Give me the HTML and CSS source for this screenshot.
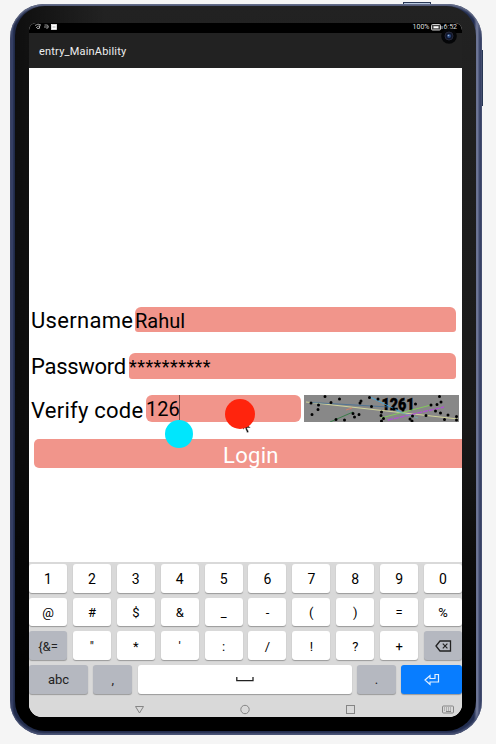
FILE: index.html
```
<!DOCTYPE html>
<html lang="en">
<head>
<meta charset="utf-8">
<title>entry_MainAbility</title>
<link rel="stylesheet" href="styles.css">
</head>
<body>
<div class="tablet">
  <i class="hw hw-top"></i><i class="hw hw-side"></i>
  <div class="bezel">
  <div class="screen">
    <div class="status">
      <svg class="status-icons" width="24" height="8" viewBox="0 0 24 8" fill="none" stroke="#bbb" stroke-width=".8"><path d="M0 2.500Q3 0 6 2M2 4Q4 2 5 4L3 6L1 4M5 2L4 6"/><path d="M9.500 2h3l1 2-2 2M9 4h4"/><rect x="16.500" y="1.500" width="5" height="5" fill="#fff" stroke="#eee"/><path d="M17.500 4h3" stroke="#999"/></svg>
      <div class="status-right"><span>100%</span><svg width="12" height="7" viewBox="0 0 12 7"><rect x=".5" y=".5" width="9" height="5.500" rx="1" fill="#444" stroke="#ccc"/><path d="M2.500 3.300h5" stroke="#fff" stroke-width="2"/><path d="M11 2v3" stroke="#bbb"/></svg><span>6:52</span></div>
      <svg class="camera" width="16" height="16" viewBox="0 0 16 16"><circle cx="8" cy="8" r="7.800" fill="#050608"/><circle cx="8" cy="8" r="4" fill="#10162b" stroke="#26283a"/><circle cx="8" cy="8" r="2" fill="#29477c"/><circle cx="7.500" cy="7.500" r=".8" fill="#9fb6d8"/></svg>
    </div>
    <div class="title"><span>entry_MainAbility</span></div>
    <main class="form">
      <div class="row username"><label>Username</label><div class="field"><span>Rahul</span></div></div>
      <div class="row password"><label>Password</label><div class="field"><span>**********</span></div></div>
      <div class="row verify"><label>Verify code</label>
        <div class="field"><span>126</span><i class="caret"></i>
          <b class="handle"></b>
          <svg class="cursor" width="9" height="13" viewBox="0 0 9 13"><path d="M1 0V9L3 7L5 12L7 11L5 7H9Z" fill="#111" stroke="#fff" stroke-width=".6"/></svg>
          <b class="pointer"></b>
        </div>
        <svg class="captcha" width="155" height="27" viewBox="0 0 155 27"><rect width="155" height="27" fill="#888"/>
          <g class="digits"><text x="77.500" y="14.500" textLength="33" lengthAdjust="spacingAndGlyphs">1261</text></g>
          <g fill="none" stroke-width=".8"><path d="M2 7L154 24" stroke="#e5e8a0"/><path d="M8 7.500L85 12" stroke="#426f95"/><path d="M66 2L99 18" stroke="#38a9e8"/><path d="M77 23L127 10" stroke="#80d94f"/><path d="M84 25L140 12" stroke="#ae53d2" stroke-width="1.300" stroke-dasharray="5 1"/><path d="M26 27L49 17" stroke="#267838"/><path d="M42 15l6-2" stroke="#e9785f"/><path d="M92 16l22 7" stroke="#70aeb0"/></g>
          <path class="dots" d="M21 1.500h0M7 8h0M14.500 10h0M14 14.500h0M8 19.500h0M27 7.500h0M35.500 4h0M57 6h0M56 8h0M49 18.500h0M50.500 22h0M55 19.500h0M32 24.500h0M40.500 25h0M65.500 2.500h0M74 4h0M67.500 11.500h0M77.500 17h0M77 20.500h0M79.500 23.500h0M77.500 26h0M90 14h0M99 15h0M111.500 9h0M108.500 21h0M106 24h0M108 26h0M122 20.500h0M127 10h0M133 9.500h0M135.500 1.500h0M137 7h0M131.500 16h0M136.500 18h0M144 20h0M140.500 24.500h0M152.500 21.500h0M152.500 25h0"/>
        </svg>
      </div>
      <div class="login"><span>Login</span></div>
    </main>
    <div class="keyboard">
      <div class="keys"><span>1</span><span>2</span><span>3</span><span>4</span><span>5</span><span>6</span><span>7</span><span>8</span><span>9</span><span>0</span></div>
      <div class="keys symbols"><span>@</span><span>#</span><span>$</span><span>&amp;</span><span>_</span><span>-</span><span>(</span><span>)</span><span>=</span><span>%</span></div>
      <div class="keys symbols"><span class="gray">{&amp;=</span><span>"</span><span>*</span><span>'</span><span>:</span><span>/</span><span>!</span><span>?</span><span>+</span><span class="gray"><svg width="17" height="12" viewBox="0 0 17 12" fill="none" stroke="#222"><path d="M1 6L5 1H15.500V11H5Z" stroke-width="1.300"/><path d="M7.800 3.700l4.600 4.600M12.400 3.700l-4.600 4.600" stroke-width="1.200"/></svg></span></div>
      <div class="keys bottom"><span class="gray">abc</span><span class="gray">,</span><span><svg class="space" width="18" height="5" viewBox="0 0 18 5"><path d="M.8 0V3.700H17V0" fill="none" stroke="#222" stroke-width="1.300"/></svg></span><span class="gray">.</span><span class="enter"><svg width="16" height="13" viewBox="0 0 16 13"><path d="M1 7L6 2.500V5.500H11V1.500H14.500V9H6V11.500Z" fill="none" stroke="#e2f0ff" stroke-width="1.200"/></svg></span></div>
      <svg class="nav" width="433" height="22" viewBox="0 0 433 22" fill="none" stroke="#858585"><path d="M106.500 9.500H114.500L110.500 16Z"/><circle cx="216" cy="12.500" r="4.200"/><rect x="317.500" y="8.500" width="8" height="8"/><rect x="413.500" y="9" width="11" height="7" rx="1"/><path d="M415 11h8M415 13h8" stroke-dasharray="1 1"/><path d="M417 14.500h5"/></svg>
    </div>
  </div>
  </div>
</div>
</body>
</html>
```
FILE: styles.css
```
* { box-sizing: border-box; }
body { margin: 0; width: 496px; height: 744px; padding: 4px 0 0 10px; overflow: hidden; background: #f5f5f5; color: #000; font-family: Roboto, "Liberation Sans", sans-serif; }
.tablet { position: relative; width: 472px; height: 731px; padding: 2px 5px 4px; border-radius: 34px; background: linear-gradient(90deg, #1a2140, #3b466d 2px, #202a49 4px, #222d50 464px, #7880a0 467px, #343f64 470px); box-shadow: inset 0 2px 2px #68708c, inset 0 -2px 2px #4c5678; }
.hw { position: absolute; background: #b7c7de; border: 1px solid #273653; z-index: -1; }
.hw-top { top: -2px; left: 393px; width: 28px; height: 4px; }
.hw-side { top: 46px; left: 470px; width: 3px; height: 56px; }
.bezel { width: 461px; height: 725px; padding: 17px 14px 14px; border-radius: 30px; background: linear-gradient(90deg, #00000090, transparent 90px), linear-gradient(#222, #191919 420px, #000 690px); }
.screen { display: flex; flex-direction: column; width: 433px; height: 694px; overflow: hidden; border-radius: 7px 7px 13px 13px; background: #fff; }
.status { position: relative; display: flex; justify-content: space-between; height: 10px; background: #000; padding: 0 5px 0 6px; color: #ddd; font-size: 7px; line-height: 8px; }
.status-right { display: flex; gap: 1px; align-items: center; height: 8px; }
.camera { position: absolute; left: 412px; top: 5px; }
.title { height: 35px; padding: 11px 10px 0; background: #222; color: #eee; font-size: 11px; line-height: 16px; letter-spacing: .2px; }
.form { display: flex; flex-direction: column; height: 494px; padding-top: 238px; }
.row { display: flex; align-items: center; height: 26px; padding-left: 2px; }
.row label { flex: none; font-size: 22px; line-height: 26px; white-space: nowrap; }
.field { position: relative; height: 25px; border-radius: 6px 6px 3px 3px; background: #f1958b; font-size: 20px; line-height: 28px; white-space: nowrap; }
.username label { width: 104px; letter-spacing: .3px; padding-top: 4px; }
.username .field { width: 321px; }
.password { margin-top: 21px; }
.password label { width: 98px; letter-spacing: -.3px; padding-top: 2px; }
.password .field { width: 327px; height: 26px; font-size: 18px; letter-spacing: .45px; line-height: 27px; }
.verify { height: 27px; margin-top: 16px; }
.verify label { width: 115px; letter-spacing: .25px; padding-top: 4px; }
.verify .field { width: 155px; height: 27px; border-radius: 6px; }
.captcha { margin-left: 3px; }
.digits { font: 900 17px Roboto, sans-serif; fill: #000; stroke: #000; stroke-width: .5; }
.dots { stroke: #000; stroke-width: 3; stroke-linecap: round; }
.caret { position: absolute; left: 33px; top: 0; width: 1px; height: 25px; background: #805049; }
.handle, .pointer { position: absolute; border-radius: 50%; }
.handle { left: 19px; top: 25px; width: 28px; height: 28px; background: #00e6fd; z-index: 1; }
.pointer { left: 79px; top: 4px; width: 30px; height: 30px; background: #ff240d; }
.cursor { position: absolute; left: 96px; top: 26px; }
.login { height: 29px; width: 428px; margin: 17px 0 0 5px; border-radius: 5px 0 0 5px; background: #f1958b; color: #fff; font-size: 22px; line-height: 33px; letter-spacing: .3px; padding-left: 189px; }
.keyboard { height: 155px; padding-top: 2px; background: #d9d9d9; }
.keys { display: grid; grid-template-columns: repeat(10, 38px); gap: 5.9px; width: 433px; height: 29px; margin-bottom: 4.7px; font-size: 14px; }
.keys span { display: flex; align-items: center; justify-content: center; height: 28.5px; padding-top: 1px; background: #fff; border-radius: 3px; box-shadow: 0 1px 1px #999; }
.keys .gray { background: #b5b8c0; color: #222; }
.symbols { font-size: 13px; }
.bottom { grid-template-columns: 59px 39px 214px 39px 61px; gap: 5.3px; margin-bottom: 0; font-size: 13px; }
.keys .enter { background: #087dff; padding: 0; }
.nav { display: block; margin-top: 2.5px; }
```
